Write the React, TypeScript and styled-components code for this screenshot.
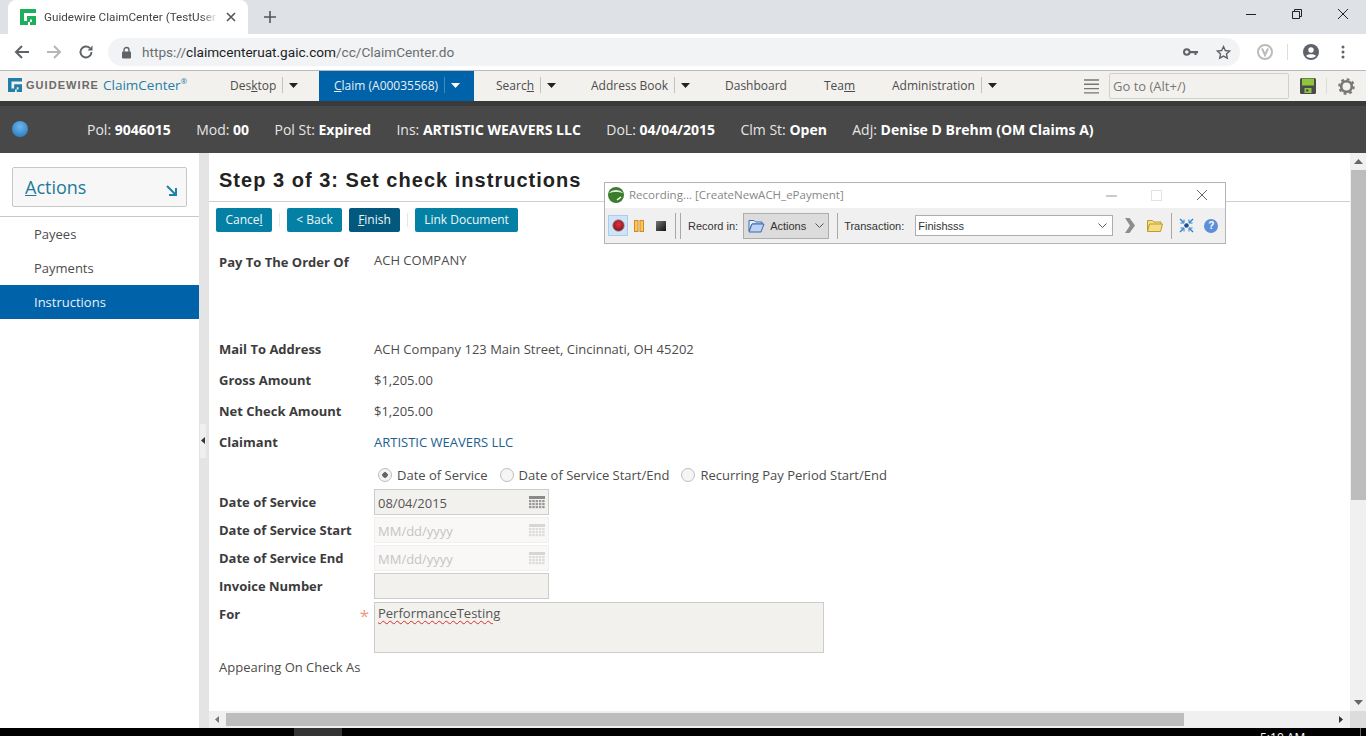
import React from 'react';
import styled, { createGlobalStyle } from 'styled-components';

const GlobalStyle = createGlobalStyle`
    html, body { margin: 0; padding: 0; background: #fff; overflow: hidden; }
    * { box-sizing: border-box; }
`;

const Hot = ({ text, at }: { text: string; at: number }) => (
    <span>
        {text.slice(0, at)}
        <u>{text[at]}</u>
        {text.slice(at + 1)}
    </span>
);

const CalendarIcon = ({ faded }: { faded?: boolean }) => (
    <svg width="16" height="14" viewBox="0 0 16 14" opacity={faded ? 0.3 : 1}>
        <rect x="0" y="0" width="16" height="3" fill="#8a8a8a" />
        {[0, 1, 2, 3, 4].map((c) =>
            [4, 7, 10].map((r) => <rect key={`${c}-${r}`} x={c * 3.3} y={r} width="2.4" height="2.2" fill="#999" />),
        )}
    </svg>
);

const Caret = ({ color = '#222', up }: { color?: string; up?: boolean }) => (
    <svg width="9" height="5" viewBox="0 0 9 5">
        <path d={up ? 'M0 5h9L4.5 0z' : 'M0 0h9L4.5 5z'} fill={color} />
    </svg>
);

const GwMark = ({ color, size }: { color: string; size: number }) => (
    <svg width={size} height={size} viewBox="0 0 16 16">
        <path d="M0 0h16v4H4v8h3V7h9v9H8v-3h4v-2.500H10V16H0z" fill={color} fillRule="evenodd" />
    </svg>
);

const App = () => {
    return (
        <Page>
            <GlobalStyle />
            <TabStrip>
                <BrowserTab>
                    <GwMark color="#1fae5b" size={16} />
                    <TabTitle>Guidewire ClaimCenter (TestUser</TabTitle>
                    <svg width="10" height="10" viewBox="0 0 10 10">
                        <path d="M1 1l8 8M9 1l-8 8" stroke="#555" strokeWidth="1.6" />
                    </svg>
                </BrowserTab>
                <NewTab>
                    <svg width="12" height="12" viewBox="0 0 12 12">
                        <path d="M6 0v12M0 6h12" stroke="#555" strokeWidth="1.6" />
                    </svg>
                </NewTab>
                <WindowButtons>
                    <svg width="12" height="12" viewBox="0 0 12 12">
                        <path d="M1 6.500h10" stroke="#222" />
                    </svg>
                    <svg width="12" height="12" viewBox="0 0 12 12">
                        <path d="M1.500 3.500h7v7h-7zM3.500 3.500v-2h7v7h-2" stroke="#222" fill="none" />
                    </svg>
                    <svg width="12" height="12" viewBox="0 0 12 12">
                        <path d="M1 1l10 10M11 1L1 11" stroke="#222" />
                    </svg>
                </WindowButtons>
            </TabStrip>
            <AddressBar>
                <AddressNav>
                    <svg width="16" height="16" viewBox="0 0 16 16">
                        <path d="M15 8H2M8 2L2 8l6 6" stroke="#5f6368" strokeWidth="2" fill="none" />
                    </svg>
                    <svg width="16" height="16" viewBox="0 0 16 16">
                        <path d="M1 8h13M8 2l6 6-6 6" stroke="#b4b6b9" strokeWidth="2" fill="none" />
                    </svg>
                    <svg width="16" height="16" viewBox="0 0 16 16">
                        <path d="M13.500 8a5.500 5.500 0 1 1-1.600-3.900" stroke="#5f6368" strokeWidth="1.900" fill="none" />
                        <path d="M14.500 1.500v5h-5z" fill="#5f6368" />
                    </svg>
                </AddressNav>
                <Omnibox>
                    <svg width="11" height="13" viewBox="0 0 11 13">
                        <path d="M3 6V4a2.500 2.500 0 0 1 5 0v2" stroke="#5f6368" strokeWidth="1.400" fill="none" />
                        <rect x="1" y="5.500" width="9" height="7" rx="1" fill="#5f6368" />
                    </svg>
                    <Url>
                        <span>https://</span>
                        <b>claimcenteruat.gaic.com</b>
                        <span>/cc/ClaimCenter.do</span>
                    </Url>
                    <OmniIcons>
                        <svg width="15" height="8" viewBox="0 0 15 8">
                            <circle cx="3.800" cy="4" r="2.800" fill="none" stroke="#5f6368" strokeWidth="2" />
                            <path d="M6 3h9v2.200h-1.500V7h-2V5.200H6z" fill="#5f6368" />
                        </svg>
                        <svg width="15" height="15" viewBox="0 0 24 24">
                            <path
                                d="M12 2.500l2.900 6.300 6.900.8-5.100 4.700 1.400 6.800-6.100-3.400-6.100 3.400 1.400-6.800-5.100-4.700 6.900-.8z"
                                fill="none"
                                stroke="#5f6368"
                                strokeWidth="2.200"
                            />
                        </svg>
                    </OmniIcons>
                </Omnibox>
                <AddressTools>
                    <svg width="16" height="16" viewBox="0 0 16 16">
                        <circle cx="8" cy="8" r="7" fill="none" stroke="#bbb" strokeWidth="2" />
                        <path d="M5 4.500L8 11l3-6.500" fill="none" stroke="#bbb" strokeWidth="2" />
                    </svg>
                    <ToolDivider />
                    <svg width="18" height="18" viewBox="0 0 18 18">
                        <circle cx="9" cy="9" r="8" fill="#5f6368" />
                        <circle cx="9" cy="7" r="2.700" fill="#fff" />
                        <path d="M4 13c1-2.200 9-2.200 10 0-2.500 2.500-7.500 2.500-10 0z" fill="#fff" />
                    </svg>
                    <svg width="4" height="14" viewBox="0 0 4 14">
                        <circle cx="2" cy="2" r="1.500" fill="#5f6368" />
                        <circle cx="2" cy="7" r="1.500" fill="#5f6368" />
                        <circle cx="2" cy="12" r="1.500" fill="#5f6368" />
                    </svg>
                </AddressTools>
            </AddressBar>
            <NavBar>
                <Brand>
                    <GwMark color="#1f7fa8" size={14} />
                    <BrandWord>GUIDEWIRE</BrandWord>
                    <BrandProduct>
                        ClaimCenter<sup>®</sup>
                    </BrandProduct>
                </Brand>
                <NavItem $left={0} $width={89}>
                    <Hot text="Desktop" at={3} />
                    <NavSplit />
                    <Caret />
                </NavItem>
                <NavActive>
                    <Hot text="Claim (A00035568)" at={0} />
                    <NavSplit $light />
                    <Caret color="#fff" />
                </NavActive>
                <NavItem $left={22} $width={117}>
                    <Hot text="Search" at={5} />
                    <NavSplit />
                    <Caret />
                </NavItem>
                <NavItem $left={0} $width={134}>
                    Address Book
                    <NavSplit />
                    <Caret />
                </NavItem>
                <NavItem $left={0} $width={99}>
                    Dashboard
                </NavItem>
                <NavItem $left={0} $width={68}>
                    <Hot text="Team" at={3} />
                </NavItem>
                <NavItem $left={0} $width={110}>
                    Administration
                    <NavSplit />
                    <Caret />
                </NavItem>
                <NavRight>
                    <svg width="15" height="15" viewBox="0 0 15 15">
                        <path d="M0 1h15M0 5.300h15M0 9.600h15M0 13.900h15" stroke="#777" strokeWidth="1.400" />
                    </svg>
                    <GoTo>Go to (Alt+/)</GoTo>
                    <svg width="16" height="16" viewBox="0 0 16 16">
                        <rect width="16" height="16" rx="1.500" fill="#4a4a4a" />
                        <rect x="2" y="0.500" width="12" height="7" fill="#8fc43f" />
                        <rect x="4.500" y="10" width="7" height="5" fill="#8fc43f" />
                        <rect x="6" y="11.500" width="2.500" height="2" fill="#4a4a4a" />
                    </svg>
                    <ToolDivider />
                    <svg width="17" height="17" viewBox="0 0 17 17">
                        <circle cx="8.500" cy="8.500" r="5.300" fill="none" stroke="#777" strokeWidth="2.600" />
                        <circle
                            cx="8.500"
                            cy="8.500"
                            r="7.300"
                            fill="none"
                            stroke="#777"
                            strokeWidth="2"
                            strokeDasharray="2.800 2.930"
                        />
                    </svg>
                </NavRight>
            </NavBar>
            <InfoBar>
                <Ball />
                <InfoItems>
                    <span>
                        Pol: <b>9046015</b>
                    </span>
                    <span>
                        Mod: <b>00</b>
                    </span>
                    <span>
                        Pol St: <b>Expired</b>
                    </span>
                    <span>
                        Ins: <b>ARTISTIC WEAVERS LLC</b>
                    </span>
                    <span>
                        DoL: <b>04/04/2015</b>
                    </span>
                    <span>
                        Clm St: <b>Open</b>
                    </span>
                    <span>
                        Adj: <b>Denise D Brehm (OM Claims A)</b>
                    </span>
                </InfoItems>
            </InfoBar>
            <Body>
                <Sidebar>
                    <ActionsBox>
                        <span>
                            <u>A</u>ctions
                        </span>
                        <svg width="11" height="11" viewBox="0 0 11 11">
                            <path d="M1 1l8 8M10 3v7H3" stroke="#1d83a8" strokeWidth="2" fill="none" />
                        </svg>
                    </ActionsBox>
                    <SideRule />
                    <SideItem>Payees</SideItem>
                    <SideItem>Payments</SideItem>
                    <SideItem $active>Instructions</SideItem>
                </Sidebar>
                <Splitter>
                    <SplitGrip>
                        <svg width="4" height="7" viewBox="0 0 4 7">
                            <path d="M4 0v7L0 3.500z" fill="#333" />
                        </svg>
                    </SplitGrip>
                </Splitter>
                <MainColumn>
                    <MainRow>
                        <Content>
                            <TitleBar>
                                <Title>Step 3 of 3: Set check instructions</Title>
                            </TitleBar>
                            <Toolbar>
                                <ActionButton $width={56}>
                                    <Hot text="Cancel" at={5} />
                                </ActionButton>
                                <ToolbarGap />
                                <ActionButton $width={55}>&lt; Back</ActionButton>
                                <ActionButton $width={51} $dark>
                                    <Hot text="Finish" at={0} />
                                </ActionButton>
                                <ToolbarGap />
                                <ActionButton $width={103}>Link Document</ActionButton>
                            </Toolbar>
                            <Form>
                                <FormRow $h={89} $top>
                                    <Label>Pay To The Order Of</Label>
                                    <Value $up>ACH COMPANY</Value>
                                </FormRow>
                                <FormRow $h={31}>
                                    <Label>Mail To Address</Label>
                                    <Value>ACH Company 123 Main Street, Cincinnati, OH 45202</Value>
                                </FormRow>
                                <FormRow $h={31}>
                                    <Label>Gross Amount</Label>
                                    <Value>$1,205.00</Value>
                                </FormRow>
                                <FormRow $h={31}>
                                    <Label>Net Check Amount</Label>
                                    <Value>$1,205.00</Value>
                                </FormRow>
                                <FormRow $h={31}>
                                    <Label>Claimant</Label>
                                    <LinkValue>ARTISTIC WEAVERS LLC</LinkValue>
                                </FormRow>
                                <RadioRow>
                                    <RadioLabel>
                                        <Radio $on />
                                        Date of Service
                                    </RadioLabel>
                                    <RadioLabel>
                                        <Radio />
                                        Date of Service Start/End
                                    </RadioLabel>
                                    <RadioLabel>
                                        <Radio />
                                        Recurring Pay Period Start/End
                                    </RadioLabel>
                                </RadioRow>
                                <FormRow $h={28}>
                                    <Label>Date of Service</Label>
                                    <Field>
                                        08/04/2015
                                        <CalendarIcon />
                                    </Field>
                                </FormRow>
                                <FormRow $h={28}>
                                    <Label>Date of Service Start</Label>
                                    <Field $disabled>
                                        MM/dd/yyyy
                                        <CalendarIcon faded />
                                    </Field>
                                </FormRow>
                                <FormRow $h={28}>
                                    <Label>Date of Service End</Label>
                                    <Field $disabled>
                                        MM/dd/yyyy
                                        <CalendarIcon faded />
                                    </Field>
                                </FormRow>
                                <FormRow $h={28}>
                                    <Label>Invoice Number</Label>
                                    <Field />
                                </FormRow>
                                <ForRow>
                                    <ForLabel>
                                        For
                                        <Required>*</Required>
                                    </ForLabel>
                                    <TextArea>
                                        <Misspelled>PerformanceTesting</Misspelled>
                                    </TextArea>
                                </ForRow>
                                <PlainLine>Appearing On Check As</PlainLine>
                            </Form>
                        </Content>
                        <VScroll>
                            <Caret color="#666" up />
                            <VThumb />
                            <Caret color="#666" />
                        </VScroll>
                    </MainRow>
                    <HScrollRow>
                        <HTrack>
                            <svg width="4" height="7" viewBox="0 0 4 7">
                                <path d="M4 0v7L0 3.500z" fill="#777" />
                            </svg>
                            <HThumb />
                            <svg width="4" height="7" viewBox="0 0 4 7">
                                <path d="M0 0v7l4-3.500z" fill="#333" />
                            </svg>
                        </HTrack>
                        <ScrollCorner />
                    </HScrollRow>
                </MainColumn>
            </Body>
            <Taskbar>
                <TaskSlot />
                <Clock>5:10 AM</Clock>
                <TaskEdge />
            </Taskbar>
            <Recorder>
                <RecorderTitle>
                    <svg width="16" height="16" viewBox="0 0 16 16">
                        <circle cx="8" cy="8" r="8" fill="#3b7d2c" />
                        <path d="M1 6c3-4 11-4 14 0-4-1.500-10-1.500-14 0z" fill="#e6e6e6" />
                        <path d="M9 13l4-3" stroke="#fff" strokeWidth="1.500" />
                    </svg>
                    <RecorderName>Recording... [CreateNewACH_ePayment]</RecorderName>
                    <RecorderControls>
                        <svg width="11" height="11" viewBox="0 0 11 11">
                            <path d="M0 6h11" stroke="#999" />
                        </svg>
                        <svg width="11" height="11" viewBox="0 0 11 11">
                            <rect x="0.500" y="0.500" width="10" height="10" fill="none" stroke="#e2e2e2" />
                        </svg>
                        <svg width="12" height="12" viewBox="0 0 12 12">
                            <path d="M1 1l10 10M11 1L1 11" stroke="#666" />
                        </svg>
                    </RecorderControls>
                </RecorderTitle>
                <RecorderBar>
                    <RecordToggle>
                        <svg width="13" height="13" viewBox="0 0 13 13">
                            <defs>
                                <radialGradient id="recDot" cx="50%" cy="40%" r="55%">
                                    <stop offset="0%" stopColor="#e2323e" />
                                    <stop offset="100%" stopColor="#8a1520" />
                                </radialGradient>
                            </defs>
                            <circle cx="6.500" cy="6.500" r="5.700" fill="url(#recDot)" stroke="#8c8c8c" strokeWidth="0.800" />
                        </svg>
                    </RecordToggle>
                    <RecIcon $width={22}>
                        <svg width="10" height="12" viewBox="0 0 10 12">
                            <rect x="0.500" y="0.500" width="3.500" height="11" fill="#f6c66a" stroke="#d88a18" />
                            <rect x="6" y="0.500" width="3.500" height="11" fill="#f6c66a" stroke="#d88a18" />
                        </svg>
                    </RecIcon>
                    <RecIcon $width={21}>
                        <svg width="10" height="10" viewBox="0 0 10 10">
                            <defs>
                                <linearGradient id="stopFill" x1="0" y1="0" x2="1" y2="1">
                                    <stop offset="0%" stopColor="#777" />
                                    <stop offset="100%" stopColor="#111" />
                                </linearGradient>
                            </defs>
                            <rect width="10" height="10" fill="url(#stopFill)" />
                        </svg>
                    </RecIcon>
                    <RecDivider $m="0 4px 0 4px" />
                    <RecDivider $m="0 7px 0 0" />
                    <RecLabel>Record in:</RecLabel>
                    <FolderSelect>
                        <svg width="17" height="14" viewBox="0 0 17 14">
                            <path d="M1 3V1.500h5l1.500 1.500H14v2H4L1 12z" fill="#e6eefc" stroke="#3a6ab0" />
                            <path d="M1 13l3-8h12l-3 8z" fill="#bcd2f2" stroke="#3a6ab0" />
                        </svg>
                        <span>Actions</span>
                        <svg width="9" height="6" viewBox="0 0 9 6">
                            <path d="M0.500 0.500L4.500 4.500L8.500 0.500" fill="none" stroke="#555" />
                        </svg>
                    </FolderSelect>
                    <RecDivider $m="0 6px 0 8px" />
                    <RecLabel>Transaction:</RecLabel>
                    <TransactionBox>
                        <span>Finishsss</span>
                        <svg width="9" height="6" viewBox="0 0 9 6">
                            <path d="M0.500 0.500L4.500 4.500L8.500 0.500" fill="none" stroke="#555" />
                        </svg>
                    </TransactionBox>
                    <RecIcon $width={34}>
                        <svg width="10" height="15" viewBox="0 0 10 15">
                            <path d="M0 0h4.500L10 7.500 4.500 15H0l5-7.500z" fill="#8c8c8c" />
                        </svg>
                    </RecIcon>
                    <RecIcon $width={16}>
                        <svg width="16" height="13" viewBox="0 0 16 13">
                            <path d="M0.500 12V1.500h5l1.500 1.500h7V5" fill="#f7dc86" stroke="#c09a2c" />
                            <path d="M0.500 12.500l2-7.500h13l-2 7.500z" fill="#f7dc86" stroke="#c09a2c" />
                        </svg>
                    </RecIcon>
                    <RecDivider $m="0 6px 0 8px" />
                    <RecIcon $width={16}>
                        <svg width="15" height="15" viewBox="0 0 15 15">
                            <circle cx="7.500" cy="7.500" r="2.300" fill="#1a4f94" />
                            <path
                                d="M1 1l3.500 3.500M14 1l-3.500 3.500M1 14l3.500-3.500M14 14l-3.500-3.500"
                                stroke="#2c82c9"
                                strokeWidth="1.400"
                            />
                            <path
                                d="M5 1.500V5H1.500M10 1.500V5h3.500M5 13.500V10H1.500M10 13.500V10h3.500"
                                fill="none"
                                stroke="#2c82c9"
                            />
                        </svg>
                    </RecIcon>
                    <RecIcon $width={30}>
                        <HelpDot>?</HelpDot>
                    </RecIcon>
                </RecorderBar>
            </Recorder>
        </Page>
    );
};

const sans = `"Open Sans", "Noto Sans", sans-serif`;

const Page = styled.div`
    position: relative;
    width: 1366px;
    height: 736px;
    overflow: hidden;
    display: flex;
    flex-direction: column;
    font-family: ${sans};
    font-size: 13px;
    color: #3c3c3c;
`;

const TabStrip = styled.div`
    height: 34px;
    background: #dee1e6;
    display: flex;
    align-items: flex-end;
    padding-left: 8px;
`;

const BrowserTab = styled.div`
    width: 240px;
    height: 34px;
    background: #fff;
    border-radius: 8px 8px 0 0;
    display: flex;
    align-items: center;
    padding: 0 12px 0 12px;
    gap: 8px;
`;

const TabTitle = styled.div`
    flex: 1;
    font-size: 11.700px;
    white-space: nowrap;
    overflow: hidden;
    color: #444;
    font-family: Roboto, sans-serif;
    -webkit-mask-image: linear-gradient(90deg, #000 90%, transparent);
    mask-image: linear-gradient(90deg, #000 90%, transparent);
`;

const NewTab = styled.div`
    width: 44px;
    height: 34px;
    display: flex;
    align-items: center;
    justify-content: center;
`;

const WindowButtons = styled.div`
    margin-left: auto;
    height: 34px;
    padding: 0 17px 6px 0;
    display: flex;
    align-items: center;
    gap: 34px;
`;

const AddressBar = styled.div`
    height: 37px;
    background: #fff;
    border-bottom: 1px solid #b8b8b8;
    display: flex;
    align-items: center;
`;

const AddressNav = styled.div`
    width: 108px;
    display: flex;
    align-items: center;
    gap: 16px;
    padding-left: 14px;
`;

const Omnibox = styled.div`
    width: 1132px;
    height: 28px;
    background: #f1f3f4;
    border-radius: 14px;
    display: flex;
    align-items: center;
    padding: 0 9px 0 13px;
`;

const Url = styled.div`
    margin-left: 10px;
    font-family: Roboto, sans-serif;
    font-size: 13.6px;
    color: #6a6d70;
    b {
        font-weight: 400;
        color: #202124;
    }
`;

const OmniIcons = styled.div`
    margin-left: auto;
    display: flex;
    align-items: center;
    gap: 18px;
`;

const AddressTools = styled.div`
    flex: 1;
    display: flex;
    align-items: center;
    padding-left: 17px;
    gap: 14px;
    svg:last-child {
        margin-left: 7px;
    }
`;

const ToolDivider = styled.div`
    width: 1px;
    height: 16px;
    background: #ddd;
`;

const NavBar = styled.div`
    height: 30px;
    background: #f3f1ed;
    display: flex;
    align-items: stretch;
    font-size: 12px;
    color: #4c4c4c;
`;

const Brand = styled.div`
    width: 230px;
    padding: 0 0 2px 8px;
    display: flex;
    align-items: center;
    gap: 4px;
`;

const BrandWord = styled.span`
    font-family: "Liberation Sans", sans-serif;
    font-weight: 700;
    font-size: 11px;
    letter-spacing: 1.050px;
    color: #6b6b6b;
`;

const BrandProduct = styled.span`
    font-size: 13.500px;
    color: #1f7fa8;
    sup {
        font-size: 8px;
        line-height: 0;
        position: relative;
        top: -1px;
    }
`;

const NavItem = styled.div<{ $left: number; $width: number }>`
    width: ${(p) => p.$width}px;
    padding: 0 0 2px ${(p) => p.$left}px;
    display: flex;
    align-items: center;
    white-space: nowrap;
    flex-shrink: 0;
`;

const NavActive = styled.div`
    width: 155px;
    background: #0062a8;
    color: #e8f0f7;
    display: flex;
    align-items: center;
    padding: 0 0 2px 15px;
    white-space: nowrap;
`;

const NavSplit = styled.span<{ $light?: boolean }>`
    width: 1px;
    height: 16px;
    margin: 0 6px 0 6px;
    background: ${(p) => (p.$light ? '#3f8cc2' : '#c4c2be')};
`;

const NavRight = styled.div`
    flex: 1;
    display: flex;
    align-items: center;
    padding-left: 82px;
    gap: 10px;
    svg:last-child {
        margin-left: 1px;
    }
`;

const GoTo = styled.div`
    width: 180px;
    height: 26px;
    margin-right: 1px;
    border: 1px solid #d2d0cc;
    border-radius: 2px;
    padding: 0 3px;
    display: flex;
    align-items: center;
    font-size: 13px;
    color: #777;
`;

const InfoBar = styled.div`
    height: 52px;
    background: linear-gradient(#3a3a3a 0, #3a3a3a 5px, #484848 5px);
    display: flex;
    align-items: center;
    padding: 4px 0 0 12px;
    color: #e6e6e6;
    font-size: 14px;
`;

const Ball = styled.div`
    width: 16px;
    height: 16px;
    border-radius: 50%;
    background: radial-gradient(circle at 50% 35%, #6db6ea, #1f73b8);
`;

const InfoItems = styled.div`
    margin-left: 59px;
    display: flex;
    gap: 25.400px;
    b {
        color: #fff;
        font-weight: 700;
    }
`;

const Body = styled.div`
    flex: 1;
    min-height: 0;
    display: flex;
`;

const Sidebar = styled.div`
    width: 199px;
    padding-top: 14px;
    flex-shrink: 0;
`;

const ActionsBox = styled.div`
    width: 175px;
    height: 40px;
    margin-left: 12px;
    background: #f7f7f7;
    border: 1px solid #c8c8c8;
    border-radius: 2px;
    display: flex;
    align-items: center;
    justify-content: space-between;
    padding: 0 9px 0 12px;
    font-size: 18px;
    color: #1d7a9c;
    svg {
        margin-top: 6px;
    }
`;

const SideRule = styled.div`
    height: 1px;
    margin-top: 9px;
    background: #c8c8c8;
`;

const SideItem = styled.div<{ $active?: boolean }>`
    height: 34px;
    padding-left: 34px;
    display: flex;
    align-items: center;
    background: ${(p) => (p.$active ? '#0062a8' : 'transparent')};
    color: ${(p) => (p.$active ? '#e8f0f7' : '#4c4c4c')};
`;

const Splitter = styled.div`
    width: 10px;
    flex-shrink: 0;
    background: #e4e4e4;
    display: flex;
    align-items: center;
    padding: 0 0 0 1px;
`;

const SplitGrip = styled.div`
    width: 6px;
    height: 34px;
    background: #efefef;
    display: flex;
    align-items: center;
    justify-content: center;
`;

const MainColumn = styled.div`
    flex: 1;
    min-width: 0;
    display: flex;
    flex-direction: column;
`;

const MainRow = styled.div`
    flex: 1;
    min-height: 0;
    display: flex;
`;

const Content = styled.div`
    flex: 1;
    min-width: 0;
    overflow: hidden;
`;

const TitleBar = styled.div`
    height: 49px;
    border-bottom: 1px solid #cfcfcf;
    padding: 15px 0 0 10px;
`;

const Title = styled.h1`
    margin: 0;
    font-family: "Liberation Sans", Arial, sans-serif;
    font-size: 20px;
    line-height: 24px;
    font-weight: 700;
    letter-spacing: 1.020px;
    color: #222;
`;

const Toolbar = styled.div`
    height: 37px;
    padding: 6px 0 0 7px;
    display: flex;
    align-items: flex-start;
    gap: 7px;
`;

const ToolbarGap = styled.span`
    width: 1px;
    height: 14px;
    margin: 5px 0 0;
    background: #e6e6e6;
`;

const ActionButton = styled.div<{ $width: number; $dark?: boolean }>`
    width: ${(p) => p.$width}px;
    height: 24px;
    border-radius: 2px;
    background: ${(p) => (p.$dark ? '#03597d' : '#0480a4')};
    color: #eef7fa;
    font-size: 12px;
    padding-bottom: 1px;
    display: flex;
    align-items: center;
    justify-content: center;
    white-space: nowrap;
`;

const Form = styled.div`
    padding: 5px 0 0 10px;
`;

const FormRow = styled.div<{ $h: number; $top?: boolean }>`
    height: ${(p) => p.$h}px;
    display: flex;
    align-items: ${(p) => (p.$top ? 'flex-start' : 'center')};
    padding-top: ${(p) => (p.$top ? '9px' : '0')};
`;

const Label = styled.div`
    width: 155px;
    flex-shrink: 0;
    font-weight: 700;
    color: #3c3c3c;
`;

const Value = styled.div<{ $up?: boolean }>`
    color: #4c4c4c;
    margin-top: ${(p) => (p.$up ? '-2px' : '0')};
`;

const LinkValue = styled.div`
    color: #20608f;
`;

const RadioRow = styled.div`
    height: 31px;
    padding: 5px 0 0 159px;
    display: flex;
    align-items: center;
    gap: 12px;
`;

const RadioLabel = styled.div`
    display: flex;
    align-items: center;
    gap: 5px;
    color: #4c4c4c;
`;

const Radio = styled.span<{ $on?: boolean }>`
    width: 14px;
    height: 14px;
    border-radius: 50%;
    border: 1px solid #bdbdbd;
    background: ${(p) => (p.$on ? 'radial-gradient(circle, #666 0 2.500px, #f3f3f3 3px)' : '#f5f5f5')};
`;

const Field = styled.div<{ $disabled?: boolean }>`
    width: 175px;
    height: 26px;
    padding: 1px 3px 0 3px;
    display: flex;
    align-items: center;
    justify-content: space-between;
    background: ${(p) => (p.$disabled ? '#f9f8f6' : '#f3f1ed')};
    border: 1px solid ${(p) => (p.$disabled ? '#efefef' : '#cccccc')};
    color: ${(p) => (p.$disabled ? '#c4c4c4' : '#555')};
`;

const ForRow = styled.div`
    height: 51px;
    margin-top: 2px;
    display: flex;
    align-items: flex-start;
`;

const ForLabel = styled.div`
    width: 155px;
    flex-shrink: 0;
    font-weight: 700;
    display: flex;
    justify-content: space-between;
    padding: 3px 5px 0 0;
`;

const Required = styled.span`
    font-weight: 400;
    font-size: 17px;
    line-height: 22px;
    color: #ec9a80;
`;

const TextArea = styled.div`
    width: 450px;
    height: 51px;
    background: #f3f1ed;
    border: 1px solid #cccccc;
    padding: 1px 3px;
    color: #555;
`;

const Misspelled = styled.span`
    text-decoration: underline wavy #d0312d 1px;
    text-underline-offset: 2px;
`;

const PlainLine = styled.div`
    margin-top: 5px;
    color: #4c4c4c;
`;

const VScroll = styled.div`
    width: 16px;
    flex-shrink: 0;
    background: #f0f0f0;
    display: flex;
    flex-direction: column;
    align-items: center;
    padding-top: 6px;
    svg:last-child {
        margin-top: auto;
        margin-bottom: 6px;
    }
`;

const VThumb = styled.div`
    width: 15px;
    height: 330px;
    margin-top: 6px;
    background: #bdbdbd;
`;

const HScrollRow = styled.div`
    height: 17px;
    display: flex;
    flex-shrink: 0;
`;

const HTrack = styled.div`
    flex: 1;
    background: #f0f0f0;
    display: flex;
    align-items: center;
    padding-left: 6px;
    svg:last-child {
        margin-left: auto;
        margin-right: 7px;
    }
`;

const HThumb = styled.div`
    width: 958px;
    height: 13px;
    margin-left: 7px;
    background: #bdbdbd;
`;

const ScrollCorner = styled.div`
    width: 16px;
    background: #dcdcdc;
`;

const Taskbar = styled.div`
    height: 8px;
    flex-shrink: 0;
    background: #000;
    display: flex;
    overflow: hidden;
    padding-left: 294px;
`;

const TaskSlot = styled.div`
    width: 48px;
    background: #333;
`;

const Clock = styled.div`
    margin-left: 918px;
    width: 60px;
    font-size: 12px;
    line-height: 16px;
    margin-top: 2px;
    color: #fff;
    white-space: nowrap;
`;

const TaskEdge = styled.div`
    margin-left: auto;
    margin-right: 5px;
    width: 1px;
    background: #666;
`;

/* floating recorder window sits over the page */
const Recorder = styled.div`
    position: absolute;
    left: 604px;
    top: 182px;
    width: 622px;
    height: 62px;
    background: #fff;
    border: 1px solid #b4b4b4;
    font-family: "Liberation Sans", Arial, sans-serif;
    font-size: 11px;
    color: #333;
    display: flex;
    flex-direction: column;
`;

const RecorderTitle = styled.div`
    height: 25px;
    flex-shrink: 0;
    display: flex;
    align-items: center;
    padding: 0 17px 1px 3px;
`;

const RecorderName = styled.span`
    margin: 0 0 2px 5px;
    color: #888;
    font-family: "Open Sans", sans-serif;
    font-size: 11.500px;
`;

const RecorderControls = styled.div`
    margin-left: auto;
    display: flex;
    align-items: center;
    gap: 34px;
`;

const RecorderBar = styled.div`
    flex: 1;
    background: #f0f0f0;
    display: flex;
    align-items: center;
    padding-left: 3px;
`;

const RecordToggle = styled.div`
    width: 20px;
    height: 21px;
    flex-shrink: 0;
    background: #cfe4f7;
    border: 1px solid #a8cdee;
    display: flex;
    align-items: center;
    justify-content: center;
`;

const RecIcon = styled.div<{ $width: number }>`
    width: ${(p) => p.$width}px;
    height: 25px;
    display: flex;
    align-items: center;
    justify-content: center;
    flex-shrink: 0;
`;

const RecDivider = styled.div<{ $m: string }>`
    width: 1px;
    height: 26px;
    margin: ${(p) => p.$m};
    background: #a8a8a8;
    flex-shrink: 0;
`;

const RecLabel = styled.span`
    white-space: nowrap;
    flex-shrink: 0;
`;

const FolderSelect = styled.div`
    width: 86px;
    height: 26px;
    flex-shrink: 0;
    margin-left: 5px;
    background: #dcdcdc;
    border: 1px solid #adadad;
    display: flex;
    align-items: center;
    gap: 5px;
    padding: 0 4px 0 4px;
    svg:last-child {
        margin-left: auto;
    }
`;

const TransactionBox = styled.div`
    width: 198px;
    height: 21px;
    flex-shrink: 0;
    margin-left: 11px;
    background: #fff;
    border: 1px solid #adadad;
    display: flex;
    align-items: center;
    justify-content: space-between;
    padding: 0 5px 0 2px;
`;

const HelpDot = styled.span`
    width: 14px;
    height: 14px;
    margin-left: 4px;
    border-radius: 50%;
    background: #5b8fd6;
    color: #fff;
    font-weight: 700;
    font-size: 10px;
    line-height: 14px;
    text-align: center;
`;

export default App;
